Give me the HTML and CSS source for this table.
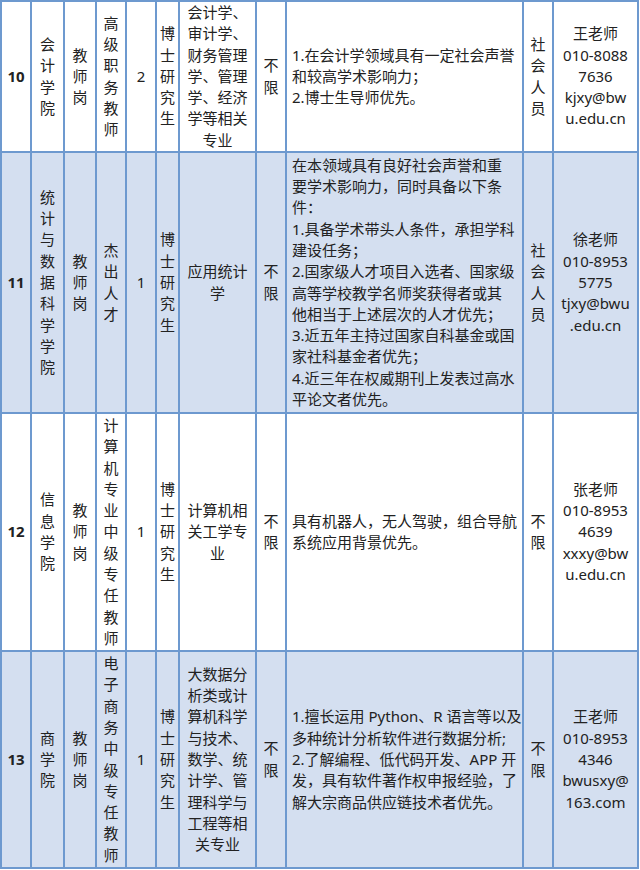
FILE: index.html
```html
<!DOCTYPE html>
<html lang="zh-CN">
<head>
<meta charset="utf-8">
<title>招聘岗位表</title>
<link rel="stylesheet" href="styles.css">
</head>
<body>
<table class="grid">
  <tr class="r r10">
    <td class="c1 num">10</td>
    <td class="c2">会<br>计<br>学<br>院</td>
    <td class="c3">教<br>师<br>岗</td>
    <td class="c4">高<br>级<br>职<br>务<br>教<br>师</td>
    <td class="c5">2</td>
    <td class="c6">博<br>士<br>研<br>究<br>生</td>
    <td class="c7">会计学、<br>审计学、<br>财务管理<br>学、管理<br>学、经济<br>学等相关<br>专业</td>
    <td class="c8">不<br>限</td>
    <td class="c9">1.在会计学领域具有一定社会声誉<br>和较高学术影响力；<br>2.博士生导师优先。</td>
    <td class="c10">社<br>会<br>人<br>员</td>
    <td class="c11">王老师<br>010-8088<br>7636<br>kjxy@bw<br>u.edu.cn</td>
  </tr>
  <tr class="r r11 alt">
    <td class="num">11</td>
    <td>统<br>计<br>与<br>数<br>据<br>科<br>学<br>学<br>院</td>
    <td>教<br>师<br>岗</td>
    <td>杰<br>出<br>人<br>才</td>
    <td>1</td>
    <td>博<br>士<br>研<br>究<br>生</td>
    <td>应用统计<br>学</td>
    <td>不<br>限</td>
    <td class="req">在本领域具有良好社会声誉和重<br>要学术影响力，同时具备以下条<br>件：<br>1.具备学术带头人条件，承担学科<br>建设任务；<br>2.国家级人才项目入选者、国家级<br>高等学校教学名师奖获得者或其<br>他相当于上述层次的人才优先；<br>3.近五年主持过国家自科基金或国<br>家社科基金者优先；<br>4.近三年在权威期刊上发表过高水<br>平论文者优先。</td>
    <td>社<br>会<br>人<br>员</td>
    <td>徐老师<br>010-8953<br>5775<br>tjxy@bwu<br>.edu.cn</td>
  </tr>
  <tr class="r r12">
    <td class="num">12</td>
    <td>信<br>息<br>学<br>院</td>
    <td>教<br>师<br>岗</td>
    <td>计<br>算<br>机<br>专<br>业<br>中<br>级<br>专<br>任<br>教<br>师</td>
    <td>1</td>
    <td>博<br>士<br>研<br>究<br>生</td>
    <td>计算机相<br>关工学专<br>业</td>
    <td>不<br>限</td>
    <td class="req">具有机器人，无人驾驶，组合导航<br>系统应用背景优先。</td>
    <td>不<br>限</td>
    <td>张老师<br>010-8953<br>4639<br>xxxy@bw<br>u.edu.cn</td>
  </tr>
  <tr class="r r13 alt">
    <td class="num">13</td>
    <td>商<br>学<br>院</td>
    <td>教<br>师<br>岗</td>
    <td>电<br>子<br>商<br>务<br>中<br>级<br>专<br>任<br>教<br>师</td>
    <td>1</td>
    <td>博<br>士<br>研<br>究<br>生</td>
    <td>大数据分<br>析类或计<br>算机科学<br>与技术、<br>数学、统<br>计学、管<br>理科学与<br>工程等相<br>关专业</td>
    <td>不<br>限</td>
    <td class="req">1.擅长运用 Python、R 语言等以及<br>多种统计分析软件进行数据分析;<br>2.了解编程、低代码开发、APP 开<br>发，具有软件著作权申报经验，了<br>解大宗商品供应链技术者优先。</td>
    <td>不<br>限</td>
    <td>王老师<br>010-8953<br>4346<br>bwusxy@<br>163.com</td>
  </tr>
</table>
</body>
</html>
```

FILE: styles.css
```css
html, body {
  margin: 0;
  padding: 0;
  background: #ffffff;
}

.grid {
  box-sizing: border-box;
  width: 639px;
  table-layout: fixed;
  border-collapse: separate;
  border-spacing: 0;
  border-left: 2px solid #6d99cf;
  border-top: 2px solid #6d99cf;
  font-family: "Noto Sans", "Noto Sans CJK SC", sans-serif;
  font-size: 15px;
  line-height: 21.3px;
  color: #222222;
}

.grid td {
  box-sizing: border-box;
  border-right: 2px solid #6d99cf;
  border-bottom: 2px solid #6d99cf;
  padding: 0;
  text-align: center;
  vertical-align: middle;
  white-space: nowrap;
  overflow: hidden;
}

.alt td {
  background: #d4dff0;
}

.r10 td { height: 151px; }
.r11 td { height: 261px; }
.r12 td { height: 238px; }
.r13 td { height: 217px; }

.c1 { width: 30px; }
.c2 { width: 33px; }
.c3 { width: 32px; }
.c4 { width: 30px; }
.c5 { width: 30px; }
.c6 { width: 23px; }
.c7 { width: 77px; }
.c8 { width: 30px; }
.c9 { width: 237px; }
.c10 { width: 30px; }
.c11 { width: 85px; }

.grid td.num {
  font-weight: 700;
}

.grid td.c9,
.grid td.req {
  text-align: left;
  padding-left: 5px;
}
```
